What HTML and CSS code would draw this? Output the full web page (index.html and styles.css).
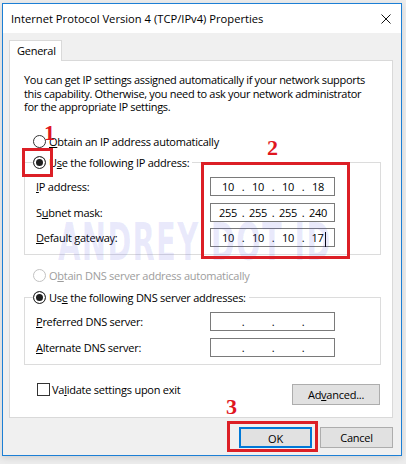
FILE: index.html
```html
<!DOCTYPE html>
<html>
<head>
<meta charset="utf-8">
<link rel="stylesheet" href="styles.css">
</head>
<body>
<div class="window">
  <div class="titlebar">
    <span class="title">Internet Protocol Version 4 (TCP/IPv4) Properties</span>
    <svg class="close" width="10" height="10" viewBox="0 0 10 10"><path d="M0.5 0.5 L9.5 9.5 M9.5 0.5 L0.5 9.5" stroke="#111" stroke-width="1" fill="none"/></svg>
  </div>
  <div class="body">
    <div class="tab">General</div>
    <div class="panel">
      <p class="intro">You can get IP settings assigned automatically if your network supports<br>this capability. Otherwise, you need to ask your network administrator<br>for the appropriate IP settings.</p>

      <div class="radio-row"><span class="radio"></span><span><u>O</u>btain an IP address automatically</span></div>
      <fieldset class="group">
        <legend><span class="radio checked"></span><span>U<u>s</u>e the following IP address:</span></legend>
        <div class="field-row">
          <label><u>I</u>P address:</label>
          <div class="ip"><span>10</span><i>.</i><span>10</span><i>.</i><span>10</span><i>.</i><span>18</span></div>
        </div>
        <div class="field-row">
          <label>S<u>u</u>bnet mask:</label>
          <div class="ip"><span>255</span><i>.</i><span>255</span><i>.</i><span>255</span><i>.</i><span>240</span></div>
        </div>
        <div class="field-row">
          <label><u>D</u>efault gateway:</label>
          <div class="ip"><span>10</span><i>.</i><span>10</span><i>.</i><span>10</span><i>.</i><span>17<b class="caret"></b></span></div>
        </div>
      </fieldset>

      <div class="radio-row disabled"><span class="radio"></span><span>O<u>b</u>tain DNS server address automatically</span></div>
      <fieldset class="group dns">
        <legend><span class="radio checked"></span><span>Us<u>e</u> the following DNS server addresses:</span></legend>
        <div class="field-row">
          <label><u>P</u>referred DNS server:</label>
          <div class="ip"><span></span><i>.</i><span></span><i>.</i><span></span><i>.</i><span></span></div>
        </div>
        <div class="field-row">
          <label><u>A</u>lternate DNS server:</label>
          <div class="ip"><span></span><i>.</i><span></span><i>.</i><span></span><i>.</i><span></span></div>
        </div>
      </fieldset>

      <div class="bottom-row">
        <div class="check-row"><span class="checkbox"></span><span>Va<u>l</u>idate settings upon exit</span></div>
        <button class="btn adv">Ad<u>v</u>anced...</button>
      </div>
    </div>
    <div class="footer">
      <button class="btn default">OK</button>
      <button class="btn">Cancel</button>
    </div>
  </div>
</div>

<div class="watermark">ANDREY DOT ID</div>

<div class="mark box1"></div>
<div class="mark box2"></div>
<div class="mark box3"></div>
<div class="num n1">1</div>
<div class="num n2">2</div>
<div class="num n3">3</div>
</body>
</html>
```
FILE: styles.css
```css
html, body {
  margin: 0;
  padding: 0;
}
body {
  position: relative;
  width: 406px;
  height: 464px;
  overflow: hidden;
  background: #ececec;
  font-family: "Open Sans", "Noto Sans", sans-serif;
  font-size: 11px;
  letter-spacing: -0.25px;
  color: #000;
}
.window {
  box-sizing: border-box;
  width: 400px;
  margin: 3px 0 0 2px;
  border: 1px solid #1c7fd5;
  background: #f0f0f0;
  box-shadow: 0 2px 6px rgba(0,0,0,0.12);
}
.titlebar {
  height: 29px;
  background: #fff;
  display: flex;
  align-items: center;
  justify-content: space-between;
  padding: 0 10px 0 8px;
}
.title {
  font-size: 11.2px;
  letter-spacing: 0;
  white-space: nowrap;
}
.close {
  display: block;
}
.body {
  padding: 7px 8px 7px 6px;
}
.tab {
  box-sizing: border-box;
  width: 53px;
  height: 21px;
  border: 1px solid #d9d9d9;
  border-bottom: none;
  background: #fff;
  padding-left: 7px;
  line-height: 20px;
  position: relative;
  z-index: 1;
  margin-bottom: -1px;
}
.panel {
  box-sizing: border-box;
  height: 358px;
  border: 1px solid #d9d9d9;
  background: #fff;
  padding: 12px 11px 0 14px;
}
.intro {
  margin: 0;
  line-height: 13.5px;
  letter-spacing: -0.32px;
  white-space: nowrap;
}
.radio-row {
  display: flex;
  align-items: center;
  gap: 3px;
  height: 16px;
  padding-left: 9px;
  margin-top: 20px;
  white-space: nowrap;
}
.radio-row.disabled {
  margin-top: 12.5px;
  color: #9d9d9d;
}
.radio-row.disabled .radio {
  border-color: #c2c2c2;
}
.radio {
  box-sizing: border-box;
  width: 13px;
  height: 13px;
  border: 1px solid #333;
  border-radius: 50%;
  background: #fff;
  flex: none;
}
.radio.checked {
  background: #1e1e1e;
  box-shadow: inset 0 0 0 2px #fff;
}
.group {
  margin: 5px 0 0 0;
  border: 1px solid #dcdcdc;
  padding: 6.5px 45px 7px 8px;
  min-width: 0;
  display: flex;
  flex-direction: column;
  gap: 6.5px;
}
.group.dns {
  margin-top: 6px;
}
.group legend {
  display: flex;
  align-items: center;
  gap: 3px;
  height: 16px;
  padding: 0 3px 0 0;
  white-space: nowrap;
}
.field-row {
  display: grid;
  grid-template-columns: 1fr 125px;
  align-items: center;
  height: 19px;
  white-space: nowrap;
}
.field-row label {
  padding-left: 3px;
}
.ip {
  box-sizing: border-box;
  height: 19px;
  border: 1px solid #7a7a7a;
  background: #fff;
  display: grid;
  grid-template-columns: 24px 6px 24px 6px 24px 6px 24px;
  padding-left: 5px;
  align-items: center;
  line-height: 17px;
}
.ip span, .ip i {
  text-align: center;
  font-style: normal;
  white-space: nowrap;
}
.caret {
  display: inline-block;
  width: 1px;
  height: 15px;
  background: #000;
  vertical-align: middle;
  margin-right: -1px;
  margin-left: 1px;
}
.bottom-row {
  display: flex;
  justify-content: space-between;
  align-items: flex-start;
  margin-top: 19px;
}
.check-row {
  display: flex;
  align-items: center;
  gap: 2px;
  margin-left: 13px;
  margin-top: -2px;
  height: 16px;
  white-space: nowrap;
}
.checkbox {
  box-sizing: border-box;
  width: 13px;
  height: 13px;
  border: 1px solid #333;
  background: #fff;
}
.btn {
  box-sizing: border-box;
  height: 21px;
  width: 73px;
  border: 1px solid #adadad;
  background: #e1e1e1;
  font-family: inherit;
  font-size: 11px;
  letter-spacing: -0.25px;
  color: #000;
  padding: 0;
  line-height: 19px;
}
.btn.adv {
  width: 88px;
  margin-right: 1px;
}
.btn.default {
  border: 2px solid #0078d7;
}
.footer {
  display: flex;
  justify-content: flex-end;
  gap: 8px;
  margin-top: 9px;
}
.watermark {
  position: absolute;
  left: 58px;
  top: 212px;
  font-family: "DejaVu Sans Condensed", "DejaVu Sans", sans-serif;
  font-weight: bold;
  font-size: 52px;
  letter-spacing: 2px;
  color: rgba(80, 80, 230, 0.12);
  transform: scaleX(0.62);
  transform-origin: left top;
  white-space: nowrap;
  pointer-events: none;
}
.mark {
  position: absolute;
  border: 3px solid #dc1f26;
  box-sizing: border-box;
  pointer-events: none;
}
.box1 { left: 22px; top: 148px; width: 31px; height: 29px; }
.box2 { left: 201px; top: 162px; width: 149px; height: 97px; }
.box3 { left: 227px; top: 421px; width: 91px; height: 31px; }
.num {
  position: absolute;
  font-family: "Liberation Serif", serif;
  font-weight: bold;
  color: #e0161e;
  font-size: 22px;
  line-height: 1;
}
.n1 { left: 44px; top: 122px; }
.n2 { left: 267px; top: 137px; }
.n3 { left: 226px; top: 396px; }
```
